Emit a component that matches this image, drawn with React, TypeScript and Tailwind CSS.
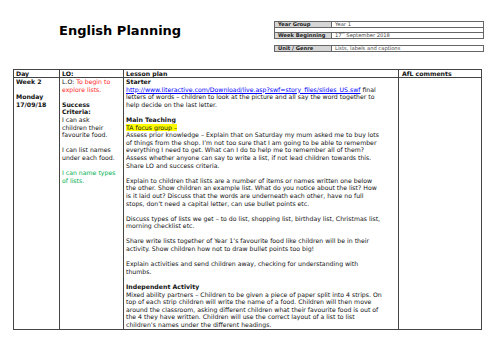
const font = { fontFamily: '"DejaVu Sans", Verdana, sans-serif' };

const LO_LINES: { text?: React.ReactNode; cls?: string }[] = [
  { text: <><span>L.O: </span><span className="text-[#ff1f1f]">To begin to</span></> },
  { text: 'explore lists.', cls: 'text-[#ff1f1f]' },
  {},
  { text: 'Success', cls: 'font-bold' },
  { text: 'Criteria:', cls: 'font-bold' },
  { text: 'I can ask' },
  { text: 'children their' },
  { text: 'favourite food.' },
  {},
  { text: 'I can list names' },
  { text: 'under each food.' },
  {},
  { text: 'I can name types', cls: 'text-[#00b050]' },
  { text: 'of lists.', cls: 'text-[#00b050]' },
];

const PLAN_LINES: { text?: React.ReactNode; cls?: string }[] = [
  { text: 'Starter', cls: 'font-bold' },
  {
    text: (
      <>
        <span className="text-[#0000ff] underline">
          http://www.literactive.com/Download/live.asp?swf=story_files/slides_US.swf
        </span>{' '}
        final
      </>
    ),
  },
  { text: 'letters of words – children to look at the picture and all say the word together to' },
  { text: 'help decide on the last letter.' },
  {},
  { text: 'Main Teaching', cls: 'font-bold' },
  { text: <span className="bg-[#ffff00]">TA focus group –</span> },
  { text: 'Assess prior knowledge – Explain that on Saturday my mum asked me to buy lots' },
  { text: 'of things from the shop. I’m not too sure that I am going to be able to remember' },
  { text: 'everything I need to get. What can I do to help me to remember all of them?' },
  { text: 'Assess whether anyone can say to write a list, if not lead children towards this.' },
  { text: 'Share LO and success criteria.' },
  {},
  { text: 'Explain to children that lists are a number of items or names written one below' },
  { text: 'the other. Show children an example list. What do you notice about the list? How' },
  { text: 'is it laid out? Discuss that the words are underneath each other, have no full' },
  { text: 'stops, don’t need a capital letter, can use bullet points etc.' },
  {},
  { text: 'Discuss types of lists we get – to do list, shopping list, birthday list, Christmas list,' },
  { text: 'morning checklist etc.' },
  {},
  { text: 'Share write lists together of Year 1’s favourite food like children will be in their' },
  { text: 'activity. Show children how not to draw bullet points too big!' },
  {},
  { text: 'Explain activities and send children away, checking for understanding with' },
  { text: 'thumbs.' },
  {},
  { text: 'Independent Activity', cls: 'font-bold' },
  { text: 'Mixed ability partners – Children to be given a piece of paper split into 4 strips. On' },
  { text: 'top of each strip children will write the name of a food. Children will then move' },
  { text: 'around the classroom, asking different children what their favourite food is out of' },
  { text: 'the 4 they have written. Children will use the correct layout of a list to list' },
  { text: 'children’s names under the different headings.' },
];

function Lines({ lines }: { lines: { text?: React.ReactNode; cls?: string }[] }) {
  return (
    <>
      {lines.map((l, i) => (
        <div key={i} className={`h-[7.6px] whitespace-nowrap ${l.cls ?? ''}`}>
          {l.text ?? '\u00a0'}
        </div>
      ))}
    </>
  );
}

function InfoRow({ label, children }: { label: string; children: React.ReactNode }) {
  return (
    <div className="flex h-[5px] leading-[5px]">
      <div className="w-[57px] shrink-0 bg-[#d6d6d6] border-r border-[#666] pl-[3px] font-bold text-[#222]">
        {label}
      </div>
      <div className="pl-[3px] text-[#444]">{children}</div>
    </div>
  );
}

export default function App() {
  return (
    <div className="w-[500px] h-[353px] bg-white text-[#111] pt-[21px] pl-[13px]" style={font}>
      {/* Titel + Kopftabelle */}
      <div className="flex items-start">
        <h1 className="ml-[46px] w-[215px] mt-[1.5px] text-[13px] leading-[16px] font-bold text-black">
          English Planning
        </h1>
        <div className="w-[210px] text-[5.2px]">
          <div className="border border-[#666]">
            <InfoRow label="Year Group">Year 1</InfoRow>
            <div className="h-[6px] border-y border-[#666]" />
            <InfoRow label="Week Beginning">
              17<sup className="text-[3px] align-top leading-[3px]">th</sup> September 2018
            </InfoRow>
          </div>
          <div className="border border-[#666] mt-[6px]">
            <InfoRow label="Unit / Genre">Lists, labels and captions</InfoRow>
          </div>
        </div>
      </div>

      {/* Planungstabelle */}
      <div className="mt-[17px] w-[469px] border border-[#444] text-[6.2px] leading-[7.6px]">
        <div className="grid grid-cols-[46px_64px_275px_82px] border-b border-[#444] font-bold h-[8px]">
          <div className="border-r border-[#444] pl-[2px]">Day</div>
          <div className="border-r border-[#444] pl-[2px]">LO:</div>
          <div className="border-r border-[#444] pl-[2px]">Lesson plan</div>
          <div className="pl-[3px]">AfL comments</div>
        </div>
        <div className="grid grid-cols-[46px_64px_275px_82px]">
          <div className="border-r border-[#444] pl-[2px] font-bold">
            <div className="h-[7.6px]">Week 2</div>
            <div className="h-[7.6px]">&nbsp;</div>
            <div className="h-[7.6px]">Monday</div>
            <div className="h-[7.6px]">17/09/18</div>
          </div>
          <div className="border-r border-[#444] pl-[2px]">
            <Lines lines={LO_LINES} />
          </div>
          <div className="border-r border-[#444] pl-[2px]">
            <Lines lines={PLAN_LINES} />
          </div>
          <div />
        </div>
      </div>
    </div>
  );
}
